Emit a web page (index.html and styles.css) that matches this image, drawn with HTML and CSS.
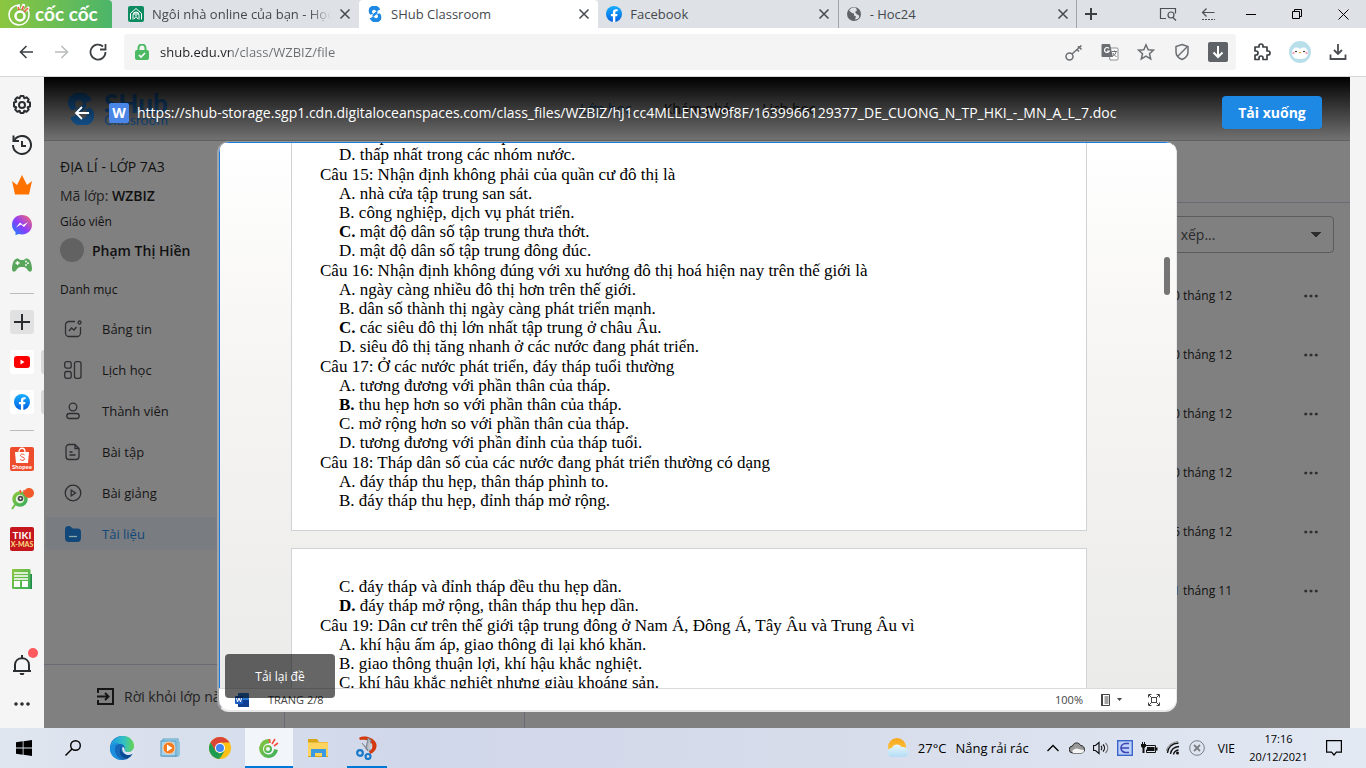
FILE: index.html
```html
<!DOCTYPE html>
<html lang="vi">
<head>
<meta charset="utf-8">
<title>SHub Classroom</title>
<link rel="stylesheet" href="styles.css">
</head>
<body>
<svg class="defs" aria-hidden="true">
  <defs>
    <linearGradient id="gMsg" x1="0" y1="1" x2="1" y2="0"><stop offset="0" stop-color="#0a8cff"/><stop offset=".45" stop-color="#8a3cff"/><stop offset="1" stop-color="#ff6a6a"/></linearGradient>
    <linearGradient id="gGreen" x1="0" y1="0" x2="1" y2="1"><stop offset="0" stop-color="#8cc63f"/><stop offset="1" stop-color="#3aaf5c"/></linearGradient>
    <linearGradient id="gFb" x1="0" y1="0" x2="0" y2="1"><stop offset="0" stop-color="#19afff"/><stop offset="1" stop-color="#0062e0"/></linearGradient>
    <linearGradient id="gEdge" x1="0" y1="0" x2="1" y2="0"><stop offset="0" stop-color="#1b9de2"/><stop offset=".6" stop-color="#35c1c0"/><stop offset="1" stop-color="#66d64b"/></linearGradient>
    <linearGradient id="gSun" x1="0" y1="0" x2="0" y2="1"><stop offset="0" stop-color="#f7a61c"/><stop offset="1" stop-color="#fdd04b"/></linearGradient>
    <linearGradient id="gCloud" x1="0" y1="0" x2="0" y2="1"><stop offset="0" stop-color="#e9f6fd"/><stop offset="1" stop-color="#b4dcf5"/></linearGradient>
  </defs>
  <symbol id="x" viewBox="0 0 12 12"><path d="M1.5 1.5l9 9m0-9l-9 9" stroke="currentColor" stroke-width="1.5" fill="none"/></symbol>
  <symbol id="dots" viewBox="0 0 16 4"><circle cx="2" cy="2" r="1.8"/><circle cx="8" cy="2" r="1.8"/><circle cx="14" cy="2" r="1.8"/></symbol>
  <symbol id="fb" viewBox="0 0 16 16"><circle cx="8" cy="8" r="8" fill="url(#gFb)"/><path d="M6.9 16v-5.700H4.900V8h2V6.300c0-2 1.200-3.100 3-3.100.9 0 1.700.1 1.700.1v2h-1c-1 0-1.300.6-1.300 1.200V8h2.200l-.4 2.300H9.300V16z" fill="#fff"/></symbol>
  <symbol id="shub" viewBox="0 0 26 32"><path d="M23.500 7A12 10.500 0 1 0 4 17.500L9.500 15a4 4 0 1 1 5.500-4z"/><path d="M2.500 24.500A12 10.500 0 1 0 22 14.500L16.500 17a4 4 0 1 1-5.500 4z"/><path d="M8 17L18 9v6L8 23z"/></symbol>
</svg>

<header class="tabs">
  <a class="brand" href="#" aria-label="Cốc Cốc">
    <svg width="22" height="24" viewBox="0 0 22 24" fill="none"><path d="M12 3A10 10 0 1 0 21 13" stroke="#fff" stroke-width="1.500"/><path d="M21 13c0-3 0-5-2-6" stroke="#fff" stroke-width="1.500"/><circle cx="12" cy="14" r="4.500" stroke="#fff" stroke-width="2.500"/><path d="M11 7L10 3m4 4l2-5m1 7l4-4" stroke="#fff" stroke-width="3"/><path d="M11 8l-.8-3m3.800 3l1.500-4m.5 6l4-4" stroke="#f0543c" stroke-width="1.600"/></svg>
    <span class="brand-name">cốc cốc</span>
  </a>
  <nav class="tab-list">
    <div class="tab">
      <svg width="16" height="16" viewBox="0 0 16 16"><rect width="16" height="16" rx="2" fill="#0d8a5f"/><path d="M2.500 13.500V7.500L8 2.500l5.500 5v6M5 13.500V9a3 3 0 0 1 6 0v4.500M6 13l2-2.500 2 2.500" stroke="#fff" fill="none"/><circle cx="8" cy="8" r="1.300" stroke="#fff" fill="none"/></svg>
      <span class="tab-title fade">Ngôi nhà online của bạn - Học</span>
      <button class="icon-btn" aria-label="Đóng"><svg width="12" height="12"><use href="#x"/></svg></button>
    </div>
    <div class="tab active">
      <svg width="16" height="16" viewBox="0 0 26 32" fill="#1e88e5"><use href="#shub"/></svg>
      <span class="tab-title">SHub Classroom</span>
      <button class="icon-btn" aria-label="Đóng"><svg width="12" height="12"><use href="#x"/></svg></button>
    </div>
    <div class="tab">
      <svg width="16" height="16"><use href="#fb"/></svg>
      <span class="tab-title">Facebook</span>
      <button class="icon-btn" aria-label="Đóng"><svg width="12" height="12"><use href="#x"/></svg></button>
    </div>
    <div class="tab lined">
      <svg width="16" height="16" viewBox="0 0 16 16"><circle cx="8" cy="8" r="7" fill="#5f6368"/><path d="M3 4.500l3 2.500 2 .5v2l2 1-1 3c4 0 4.500-3 4-4L10.500 8 9 6l2-1.500-1-2.500C7 1 5 2 3 4.500z" fill="#dee1e6"/></svg>
      <span class="tab-title">- Hoc24</span>
      <button class="icon-btn" aria-label="Đóng"><svg width="12" height="12"><use href="#x"/></svg></button>
    </div>
  </nav>
  <button class="icon-btn new-tab" aria-label="Thẻ mới"><svg width="12" height="12" viewBox="0 0 12 12"><path d="M6 0v12M0 6h12" stroke="#3c4043" stroke-width="2"/></svg></button>
  <div class="win">
    <button class="icon-btn" aria-label="Tìm thẻ"><svg width="18" height="14" viewBox="0 0 18 14" fill="none" stroke="#4c5054" stroke-width="1.200"><path d="M7 11.500H1.500V1.500h15v5"/><circle cx="12" cy="8" r="3"/><path d="M14 10.500l3 3"/></svg></button>
    <button class="icon-btn" aria-label="Thanh bên"><svg width="14" height="14" viewBox="0 0 14 14" fill="none" stroke="#4c5054" stroke-width="1.200"><path d="M13.500 5.500H1.500M5.500 1.500l-4 4 4 4"/><path d="M1 12.500h13" stroke-dasharray="2 1"/></svg></button>
    <button class="icon-btn wide" aria-label="Thu nhỏ"><svg width="10" height="10" viewBox="0 0 10 10"><path d="M0 5.500h10" stroke="#000"/></svg></button>
    <button class="icon-btn wide" aria-label="Khôi phục"><svg width="10" height="10" viewBox="0 0 10 10" fill="none" stroke="#000"><path d="M.5 2.500h7v7h-7zM2.500 2.500v-2h7v7h-2"/></svg></button>
    <button class="icon-btn wide" aria-label="Đóng cửa sổ"><svg width="11" height="11" viewBox="0 0 11 11"><path d="M.5.5l10 10m0-10l-10 10" stroke="#000"/></svg></button>
  </div>
</header>

<div class="toolbar">
  <div class="nav-btns">
    <button class="icon-btn" aria-label="Quay lại"><svg width="14" height="14" viewBox="0 0 14 14" fill="none" stroke="#3c4043" stroke-width="1.600"><path d="M14 7H1.500M7.500 1l-6 6 6 6"/></svg></button>
    <button class="icon-btn" aria-label="Tiến"><svg width="14" height="14" viewBox="0 0 14 14" fill="none" stroke="#babcbe" stroke-width="1.600"><path d="M0 7h12.500M6.500 1l6 6-6 6"/></svg></button>
    <button class="icon-btn" aria-label="Tải lại"><svg width="18" height="18" viewBox="0 0 18 18" fill="none" stroke="#3c4043" stroke-width="1.800"><path d="M16.500 9A7.500 7.500 0 1 1 14 3.500"/><path d="M16.500 1v5.500H11"/></svg></button>
  </div>
  <div class="address">
    <svg width="14" height="16" viewBox="0 0 14 16"><path d="M3.500 7V4a3.500 3.500 0 0 1 7 0v3" stroke="#4cb963" stroke-width="2" fill="none"/><rect y="6" width="14" height="10" rx="2" fill="#4cb963"/><path d="M4 11l2 2 4-4" stroke="#fff" stroke-width="1.600" fill="none"/></svg>
    <input class="url" type="text" aria-label="Địa chỉ" value="shub.edu.vn/class/WZBIZ/file">
    <div class="addr-tools">
      <button class="icon-btn" aria-label="Mật khẩu"><svg width="18" height="18" viewBox="0 0 18 18" fill="none" stroke="#6b6e72" stroke-width="1.500"><circle cx="4.500" cy="13.500" r="3.500"/><path d="M7 11l9.500-8.500M12 6.500l2 2M14.500 4.500l2 2M13.500 5.500V3"/></svg></button>
      <button class="icon-btn" aria-label="Dịch"><svg width="18" height="18" viewBox="0 0 18 18"><path d="M7 5h9a1 1 0 0 1 1 1v10a1 1 0 0 1-1 1H9z" fill="#fff" stroke="#8b8e91"/><path d="M1.500 1H9l3 13H1.500a1 1 0 0 1-1-1V2a1 1 0 0 1 1-1z" fill="#6b6e72"/><path d="M8 5.500A2.500 2.500 0 1 0 8.300 8H6" stroke="#fff" stroke-width="1.200" fill="none"/><path d="M11 8.500h5M13.500 7.500v1m1.500 0c0 2-2 4-3 4.500m0-3c1 2 2 3 3.500 3.500" stroke="#6b6e72" fill="none"/></svg></button>
      <button class="icon-btn" aria-label="Dấu trang"><svg width="18" height="18" viewBox="0 0 18 18"><path d="M9 1.800l2.200 4.900 5.200.5-3.900 3.500 1.200 5.200L9 13.200l-4.700 2.700 1.200-5.200-3.900-3.500 5.200-.5z" stroke="#6b6e72" stroke-width="1.500" fill="none"/></svg></button>
      <button class="icon-btn" aria-label="Chặn quảng cáo"><svg width="18" height="18" viewBox="0 0 18 18" fill="none" stroke="#6b6e72" stroke-width="1.500"><path d="M9 1.500l6 2V9c0 3.500-2.500 6-6 7.500C5.500 15 3 12.500 3 9V3.500z"/><path d="M4.500 13.500L14 4"/></svg></button>
      <button class="icon-btn" aria-label="Tải video"><svg width="20" height="20" viewBox="0 0 20 20"><rect width="20" height="20" rx="2" fill="#5f6368"/><path d="M10 4v11M5.500 10.500L10 15l4.500-4.500" stroke="#fff" stroke-width="2" fill="none"/></svg></button>
    </div>
  </div>
  <div class="ext">
    <button class="icon-btn" aria-label="Tiện ích"><svg width="18" height="18" viewBox="0 0 18 18"><path d="M2 4h4V3a2 2 0 0 1 4 0v1h4v4h1a2 2 0 0 1 0 4h-1v4.500h-4V15a2 2 0 0 0-4 0v1.500H2V12h1a2 2 0 0 0 0-4H2z" stroke="#3c4043" stroke-width="1.700" fill="none" stroke-linejoin="round"/></svg></button>
    <button class="icon-btn" aria-label="Hồ sơ"><svg width="22" height="22" viewBox="0 0 22 22"><circle cx="11" cy="11" r="11" fill="#b9e0ea"/><path d="M3 12c0-5 4-7 8-4 4-3 8-1 8 4s-4 6-8 6-8-1-8-6z" fill="#fff"/><path d="M9.500 11h3l-1.500 1.500z" fill="#f09a2e"/><circle cx="7" cy="10.500" r=".8"/><circle cx="15" cy="10.500" r=".8"/><circle cx="4.500" cy="12" r="1.200" fill="#f8a3b2"/><circle cx="17.500" cy="12" r="1.200" fill="#f8a3b2"/></svg></button>
    <button class="icon-btn" aria-label="Tải xuống"><svg width="18" height="18" viewBox="0 0 18 18" fill="none" stroke="#4a4d51" stroke-width="1.800"><path d="M9 1v10M5 7l4 4 4-4M1.500 11.500V16h15v-4.500"/></svg></button>
  </div>
</div>

<main class="work">
  <aside class="rail">
    <button class="rail-item" aria-label="Cài đặt"><svg width="22" height="22" viewBox="0 0 22 22" fill="none" stroke="#2b2e31" stroke-width="2"><circle cx="11" cy="11" r="3"/><path d="M9.500 2h3l.7 2.300 2.300-1 2.200 2.200-1.100 2.200L19 8.500v4l-2.400.8 1.100 2.300-2.200 2.200-2.300-1.100-.7 2.300h-3l-.9-2.300-2.200 1.100-2.200-2.200 1.100-2.300L3 12.500v-4l2.300-.8-1.100-2.200 2.200-2.200 2.200 1z" stroke-linejoin="round"/></svg></button>
    <button class="rail-item" aria-label="Lịch sử"><svg width="20" height="20" viewBox="0 0 20 20" fill="none" stroke="#2b2e31" stroke-width="2"><path d="M2.500 5A9 9 0 1 1 1 10"/><path d="M1.500.5V6H7M10 6v5h4"/></svg></button>
    <button class="rail-item" aria-label="Điểm thưởng"><svg width="20" height="20" viewBox="0 0 20 20"><path d="M0 6l5 4 5-10 5 10 5-4-3 13.500H3z" fill="#ff7200"/></svg></button>
    <button class="rail-item" aria-label="Messenger"><svg width="20" height="20" viewBox="0 0 20 20"><path d="M10 0c5.600 0 10 4.100 10 9.700s-4.400 9.700-10 9.700c-1 0-2-.1-2.900-.4L3.500 20v-3C1.300 15.200 0 12.700 0 9.700 0 4.100 4.400 0 10 0z" fill="url(#gMsg)"/><path d="M4 12.500l4-5 3 2.500 5-3-4 5-3-2.500z" fill="#fff"/></svg></button>
    <button class="rail-item" aria-label="Trò chơi"><svg width="20" height="14" viewBox="0 0 20 14"><path d="M4 1c2-1 3 0 4 1h4c1-1 2-2 4-1 3 1 4 7 4 10s-3 4-5 0c-1-1-2-2-3-2H8c-1 0-2 1-3 2-2 4-5 3-5 0S1 2 4 1z" fill="#58a65c"/><path d="M5.500 3v4m-2-2h4" stroke="#fff" stroke-width="1.400"/><circle cx="14" cy="3.500" r=".9" fill="#fff"/><circle cx="14" cy="7" r=".9" fill="#fff"/><circle cx="16" cy="5.200" r=".9" fill="#fff"/></svg></button>
    <hr class="rail-line">
    <button class="rail-item" aria-label="Thêm"><span class="chip grey"><svg width="16" height="16" viewBox="0 0 16 16"><path d="M8 0v16M0 8h16" stroke="#2b2e31" stroke-width="2"/></svg></span></button>
    <button class="rail-item docked" aria-label="YouTube"><span class="chip"><svg width="16" height="12" viewBox="0 0 16 12"><rect width="16" height="12" rx="3" fill="#f00"/><path d="M6.500 3.500v5l4-2.500z" fill="#fff"/></svg></span></button>
    <button class="rail-item docked" aria-label="Facebook"><span class="chip"><svg width="16" height="16"><use href="#fb"/></svg></span></button>
    <hr class="rail-line">
    <button class="rail-item" aria-label="Shopee"><span class="tile shopee"><svg width="24" height="16" viewBox="0 0 24 16"><path d="M5 5h14l-1 11H6z" fill="#fff"/><path d="M9 5c0-5 6-5 6 0" stroke="#fff" fill="none" stroke-width="1.300"/><path d="M14.500 8c-1.500-1.500-4.500-1-4 .8.500 1.500 4 1.200 4 3 0 2-3 2-4.500.7" stroke="#ee4d2d" fill="none"/></svg><small class="tile-text">Shopee</small></span></button>
    <button class="rail-item" aria-label="Tìm kiếm Cốc Cốc"><svg width="24" height="24" viewBox="0 0 24 24"><path d="M2 22l5-7" stroke="#6cbd45" stroke-width="2"/><circle cx="10" cy="12" r="6" fill="#e6f5e2" stroke="url(#gGreen)" stroke-width="3.500"/><circle cx="10.500" cy="11.500" r="2.800" fill="#4a4a4a"/><circle cx="10.500" cy="11.500" r="1" fill="#fff"/><path d="M11 6l-1-3m4 4l0-4" stroke="#f0543c" stroke-width="1.500"/><circle cx="19" cy="6" r="5" fill="#f15a29"/></svg></button>
    <button class="rail-item" aria-label="Tiki"><span class="tile tiki"><small class="tile-text big">TIKI</small><small class="tile-text gold">X-MAS</small></span></button>
    <button class="rail-item" aria-label="Tin tức"><svg width="20" height="20" viewBox="0 0 20 20"><path d="M17 5h3v15H2z" fill="#1f8a4c"/><rect width="18.500" height="20" rx="1" fill="url(#gGreen)"/><path d="M2 4h14M2 7h14M2 10h14" stroke="#fff" stroke-width="1.500"/><rect x="2" y="12" width="6" height="6" fill="#fff"/><rect x="10" y="12" width="6" height="6" fill="#fff"/></svg></button>
    <div class="rail-end">
      <button class="rail-item" aria-label="Thông báo"><svg width="24" height="30" viewBox="0 0 24 30"><path d="M3 22h18M5 22v-6c0-9 14-9 14 0v6" stroke="#2b2e31" stroke-width="2" fill="none"/><path d="M9.500 24h5l-1 2h-3zM11 6h2v3h-2z" fill="#2b2e31"/></svg><span class="dot-badge"></span></button>
      <button class="rail-item" aria-label="Thêm nữa"><svg width="16" height="4" fill="#2b2e31"><use href="#dots"/></svg></button>
    </div>
  </aside>

  <section class="page">
    <div class="app">
      <header class="app-head">
        <a class="shub" href="#"><svg width="26" height="32" fill="#1a72c4"><use href="#shub"/></svg><span><b class="shub-name">SHub</b><span class="shub-sub">Classroom</span></span></a>
        <nav class="app-nav"><a class="on" href="#">Lớp học</a><a href="#">Khám phá</a><a href="#">Lịch học</a></nav>
      </header>
      <div class="app-body">
        <aside class="class-nav">
          <div class="class-info">
            <h1 class="class-name">ĐỊA LÍ - LỚP 7A3</h1>
            <p class="code">Mã lớp: <b>WZBIZ</b></p>
            <p class="label">Giáo viên</p>
            <p class="teacher"><span class="avatar"></span>Phạm Thị Hiền</p>
            <p class="label">Danh mục</p>
          </div>
          <nav class="menu">
            <a href="#"><svg viewBox="0 0 18 18"><path d="M11 1.500H5A3.500 3.500 0 0 0 1.500 5v8A3.500 3.500 0 0 0 5 16.500h8a3.500 3.500 0 0 0 3.500-3.500V7M5 11l2.500-3 2.500 2 2.500-3"/><circle cx="15.500" cy="2.500" r="1.500"/></svg>Bảng tin</a>
            <a href="#"><svg viewBox="0 0 18 18"><rect x=".7" y=".7" width="6.500" height="6.500" rx="2"/><rect x=".7" y="10.500" width="6.500" height="6.800" rx="2"/><rect x="10.500" y=".7" width="6.500" height="16.600" rx="2"/></svg>Lịch học</a>
            <a href="#"><svg viewBox="0 0 18 18"><circle cx="9" cy="5" r="3.800"/><rect x="2.800" y="11.500" width="12.400" height="5" rx="2.500"/></svg>Thành viên</a>
            <a href="#"><svg viewBox="0 0 18 18"><path d="M11 1.500H5A3 3 0 0 0 2 4.500v9a3 3 0 0 0 3 3h7a3 3 0 0 0 3-3v-8zV5.500h4M5.500 9h3M5.500 12h6"/></svg>Bài tập</a>
            <a href="#"><svg viewBox="0 0 18 18"><circle cx="9" cy="9" r="7.800"/><path d="M7.200 6.200v5.600L11.500 9z"/></svg>Bài giảng</a>
            <a class="current" href="#"><svg viewBox="0 0 18 18"><path d="M1 5c0-3 1-4 3.500-4 3 0 3 2.500 5 2.500H13c3 0 4 1 4 4v5c0 3-1 4.500-4 4.500H5c-3 0-4-1.500-4-4.500z" fill="#12477a" stroke="none"/><path d="M5 11.500h8" stroke="#8aa"/></svg>Tài liệu</a>
          </nav>
          <a class="leave" href="#"><svg width="17" height="17" viewBox="0 0 17 17" fill="none" stroke="#161616" stroke-width="2"><path d="M1 5V1h15v15H1v-4M0 8.500h11M8 5l3.500 3.500L8 12"/></svg>Rời khỏi lớp này</a>
        </aside>
        <div class="folders"></div>
        <div class="files">
          <div class="files-head"></div>
          <div class="sort"><select aria-label="Sắp xếp"><option>Sắp xếp...</option></select></div>
          <ul class="file-list">
            <li><span>20 tháng 12</span><button class="icon-btn" aria-label="Tuỳ chọn"><svg width="14" height="4" viewBox="0 0 16 4"><use href="#dots"/></svg></button></li>
            <li><span>20 tháng 12</span><button class="icon-btn" aria-label="Tuỳ chọn"><svg width="14" height="4" viewBox="0 0 16 4"><use href="#dots"/></svg></button></li>
            <li><span>20 tháng 12</span><button class="icon-btn" aria-label="Tuỳ chọn"><svg width="14" height="4" viewBox="0 0 16 4"><use href="#dots"/></svg></button></li>
            <li><span>20 tháng 12</span><button class="icon-btn" aria-label="Tuỳ chọn"><svg width="14" height="4" viewBox="0 0 16 4"><use href="#dots"/></svg></button></li>
            <li><span>16 tháng 12</span><button class="icon-btn" aria-label="Tuỳ chọn"><svg width="14" height="4" viewBox="0 0 16 4"><use href="#dots"/></svg></button></li>
            <li><span>1 tháng 11</span><button class="icon-btn" aria-label="Tuỳ chọn"><svg width="14" height="4" viewBox="0 0 16 4"><use href="#dots"/></svg></button></li>
          </ul>
        </div>
      </div>
    </div>

    <div class="viewer">
      <header class="viewer-head">
        <button class="icon-btn" aria-label="Quay lại"><svg width="16" height="14" viewBox="0 0 16 14" fill="none" stroke="#fff" stroke-width="1.800"><path d="M15 7H2M8 1L2 7l6 6"/></svg></button>
        <span class="w-icon">W</span>
        <span class="file-url">https://shub-storage.sgp1.cdn.digitaloceanspaces.com/class_files/WZBIZ/hJ1cc4MLLEN3W9f8F/1639966129377_DE_CUONG_N_TP_HKI_-_MN_A_L_7.doc</span>
        <button class="download">Tải xuống</button>
      </header>
      <div class="frame">
        <div class="doc">
          <article class="paper first">
            <section class="q">
              <p class="opt">C. thấp hơn ở các nước phát triển.</p>
              <p class="opt">D. thấp nhất trong các nhóm nước.</p>
            </section>
            <section class="q">
              <p>Câu 15: Nhận định không phải của quần cư đô thị là</p>
              <p class="opt">A. nhà cửa tập trung san sát.</p>
              <p class="opt">B. công nghiệp, dịch vụ phát triển.</p>
              <p class="opt"><b>C.</b> mật độ dân số tập trung thưa thớt.</p>
              <p class="opt">D. mật độ dân số tập trung đông đúc.</p>
            </section>
            <section class="q">
              <p>Câu 16: Nhận định không đúng với xu hướng đô thị hoá hiện nay trên thế giới là</p>
              <p class="opt">A. ngày càng nhiều đô thị hơn trên thế giới.</p>
              <p class="opt">B. dân số thành thị ngày càng phát triển mạnh.</p>
              <p class="opt"><b>C.</b> các siêu đô thị lớn nhất tập trung ở châu Âu.</p>
              <p class="opt">D. siêu đô thị tăng nhanh ở các nước đang phát triển.</p>
            </section>
            <section class="q">
              <p>Câu 17: Ở các nước phát triển, đáy tháp tuổi thường</p>
              <p class="opt">A. tương đương với phần thân của tháp.</p>
              <p class="opt"><b>B.</b> thu hẹp hơn so với phần thân của tháp.</p>
              <p class="opt">C. mở rộng hơn so với phần thân của tháp.</p>
              <p class="opt">D. tương đương với phần đỉnh của tháp tuổi.</p>
            </section>
            <section class="q">
              <p>Câu 18: Tháp dân số của các nước đang phát triển thường có dạng</p>
              <p class="opt">A. đáy tháp thu hẹp, thân tháp phình to.</p>
              <p class="opt">B. đáy tháp thu hẹp, đỉnh tháp mở rộng.</p>
            </section>
          </article>
          <article class="paper second">
            <section class="q">
              <p class="opt">C. đáy tháp và đỉnh tháp đều thu hẹp dần.</p>
              <p class="opt"><b>D.</b> đáy tháp mở rộng, thân tháp thu hẹp dần.</p>
            </section>
            <section class="q">
              <p>Câu 19: Dân cư trên thế giới tập trung đông ở Nam Á, Đông Á, Tây Âu và Trung Âu vì</p>
              <p class="opt">A. khí hậu ấm áp, giao thông đi lại khó khăn.</p>
              <p class="opt">B. giao thông thuận lợi, khí hậu khắc nghiệt.</p>
              <p class="opt">C. khí hậu khắc nghiệt nhưng giàu khoáng sản.</p>
            </section>
          </article>
          <span class="thumb"></span>
        </div>
        <footer class="status">
          <svg width="14" height="14" viewBox="0 0 14 14"><rect x="3" width="11" height="14" rx="1" fill="#2b7cd3"/><rect x="3" y="7" width="11" height="7" fill="#103f91"/><rect y="3" width="8" height="8" rx="1" fill="#185abd"/><path d="M1.500 5l1 4 1.500-4 1.500 4 1-4" stroke="#fff" fill="none"/></svg>
          <span class="page-no">TRANG 2/8</span>
          <span class="zoom">100%</span>
          <button class="icon-btn view-mode" aria-label="Chế độ xem"><svg width="22" height="12" viewBox="0 0 22 12"><path d="M.500.500h8v11h-8zM3.500 3h4M3.500 5h4M3.500 7h4M3.500 9h4" stroke="#444" fill="none"/><path d="M0 0h2v12H0zM16 4h5l-2.500 3z" fill="#444"/></svg></button>
          <button class="icon-btn full" aria-label="Toàn màn hình"><svg width="12" height="12" viewBox="0 0 12 12" fill="none" stroke="#444"><path d="M.5 3.500v-3h3M8.500.5h3v3M11.500 8.500v3h-3M3.500 11.500h-3v-3M1 1l3 3M11 1L8 4M11 11L8 8M1 11l3-3"/><rect x="3.500" y="3.500" width="5" height="5"/></svg></button>
        </footer>
      </div>
      <button class="reload">Tải lại đề</button>
    </div>
  </section>
</main>

<footer class="taskbar">
  <nav class="apps">
    <button class="app-btn" aria-label="Bắt đầu"><svg width="16" height="16" viewBox="0 0 16 16"><path d="M0 2.300l6.700-1v6.200H0zM7.500 1.200L16 0v7.500H7.500zM0 8.400h6.700v6.300L0 13.700zM7.500 8.400H16V16l-8.500-1.200z"/></svg></button>
    <button class="app-btn" aria-label="Tìm kiếm"><svg width="16" height="16" viewBox="0 0 16 16" fill="none" stroke="#000" stroke-width="1.400"><circle cx="10.500" cy="5.500" r="4.800"/><path d="M7 9L.5 15.500"/></svg></button>
    <button class="app-btn" aria-label="Microsoft Edge"><svg width="24" height="24" viewBox="0 0 24 24"><circle cx="12" cy="12" r="12" fill="#1668b8"/><path d="M1 9C3 2 9 0 13 0c7 0 11 5 11 10 0 4-3 6-6 6-3 0-4-1-3.500-2.500C15.500 10 13 8 10 8c-4 0-8 2-9.800 6C0 12 .3 10.500 1 9z" fill="url(#gEdge)"/><path d="M0 12c1-3.500 5-6 9-5-3 1-4.500 4-4 8 .5 5 5 8 8 8.800C5 24.500 0 19 0 12z" fill="#1b8fdd"/><path d="M11.500 10.500c-2 4 1 8.500 6 8.500 2 0 4-.8 5-1.500-1 2-3 4-5 5-6 0-10-6-6-12z" fill="#0b4a91"/><path d="M12.500 11c-.8 2.500 0 5.500 3.500 7.500 3 1.200 6 0 6.500-1l1.500 1.500V11c-1 4-3.500 5-6 5s-4-1-3.500-2.500c.3-1-.5-2.500-2-2.500z" fill="#dfe6f1"/></svg></button>
    <button class="app-btn" aria-label="Media Player"><svg width="22" height="20" viewBox="0 0 22 20"><rect x="3" y="1" width="15" height="17" fill="#b4dcef" stroke="#5ba3c7"/><path d="M18 3l2 1v13l-2 2" fill="#8fc4de"/><rect x="1" y="3" width="15" height="15" fill="#a5d3ec" stroke="#4b93bd"/><circle cx="9" cy="10" r="6" fill="#f47b20" stroke="#fbd3b0"/><path d="M7 6.500v7l5.500-3.500z" fill="#fff"/></svg></button>
    <button class="app-btn" aria-label="Chrome"><svg width="22" height="22" viewBox="0 0 22 22"><circle cx="11" cy="11" r="11" fill="#fbc116"/><path d="M1.500 5.500A11 11 0 0 1 20.500 5.500H11L6.200 13.700z" fill="#db4437"/><path d="M1.500 5.500L6.500 14 11 16.500l-.5 5.500A11 11 0 0 1 1.500 5.500z" fill="#1b9c52"/><path d="M10.500 22l5.300-8.500-4.800 3z" fill="#1b9c52"/><circle cx="11" cy="11" r="5" fill="#fff"/><circle cx="11" cy="11" r="4" fill="#4285f4"/></svg></button>
    <button class="app-btn focused" aria-label="Cốc Cốc"><svg width="20" height="20" viewBox="0 0 20 20"><path d="M11 1A9.500 9.500 0 1 0 19 12l-4-1A5.500 5.500 0 1 1 10 5.500z" fill="url(#gGreen)"/><circle cx="9" cy="11" r="3" fill="none" stroke="url(#gGreen)" stroke-width="2"/><path d="M11 5l-.5-4M13 6l3-5M15 8l4-3" stroke="#f0543c" stroke-width="1.600"/></svg></button>
    <button class="app-btn" aria-label="Thư mục"><svg width="22" height="20" viewBox="0 0 22 20"><path d="M1 1h9l2 3h9v15H1z" fill="#d9a518"/><path d="M1 4.500h20V18H1z" fill="#ffd45e"/><path d="M4 19v-8h15v8h-4v-4H8v4z" fill="#3b9ae0"/></svg></button>
    <button class="app-btn running" aria-label="Snipping Tool"><svg width="22" height="24" viewBox="0 0 22 24"><path d="M3 2c5-3 14-1 17 5 2 5-2 10-6 11l-1-3c3-1 4-4 3-7-2-4-8-5-12-4z" fill="#d4380d"/><path d="M12 2l-2 11 3 1 2-10zM6 7l6 8 3-1" fill="#a9b2ba" stroke="#7d868e"/><path d="M13 5l3 5-4 6z" fill="#c4cbd1"/><circle cx="4" cy="17" r="2.800" fill="none" stroke="#1979c9" stroke-width="2.200"/><circle cx="12" cy="20.500" r="2.500" fill="none" stroke="#1979c9" stroke-width="2.200"/></svg></button>
  </nav>
  <div class="tray">
    <a class="weather" href="#"><svg width="22" height="20" viewBox="0 0 22 20"><circle cx="10" cy="9" r="9" fill="url(#gSun)"/><path d="M5 19a4.500 4.500 0 0 1 0-9c1-4 7-5 9.500-1 4-.5 7 2 7 5 0 3-2 5-5 5z" fill="url(#gCloud)"/></svg><span>27°C</span><span>Nắng rải rác</span></a>
    <div class="tray-icons">
      <button class="icon-btn" aria-label="Hiện biểu tượng ẩn"><svg width="12" height="8" viewBox="0 0 12 8"><path d="M.5 7L6 1.500 11.500 7" stroke="#000" stroke-width="1.300" fill="none"/></svg></button>
      <button class="icon-btn" aria-label="OneDrive"><svg width="16" height="12" viewBox="0 0 16 12"><path d="M4 11a3.500 3.500 0 0 1-.5-7C5 0 10 0 11.500 3.500 14 3.500 15.500 5.500 15.500 7.500S14 11 12 11z" fill="#999" stroke="#222"/><path d="M4 11c-1-1-1-3 1-3.500C8 5 10 8 15 8c0 2-1 3-3 3z" fill="#f4f4f4"/></svg></button>
      <button class="icon-btn" aria-label="Âm lượng"><svg width="16" height="14" viewBox="0 0 16 14" fill="none" stroke="#111" stroke-width="1.200"><path d="M.5 4.500h2L6 1.500v11L2.500 9.500h-2zM8 5c1 1 1 3 0 4M10 3.500c2 2 2 5 0 7"/><path d="M12.500 2c3 3 3 7 0 10" stroke="#777"/></svg></button>
      <button class="icon-btn" aria-label="Unikey"><svg width="16" height="16" viewBox="0 0 16 16"><rect x=".7" y=".7" width="14.600" height="14.600" fill="#bcd0fb" stroke="#3b64c8" stroke-width="1.400"/><path d="M12 3.500H8.500a4.500 4.500 0 0 0 0 9H12M4.500 8H12" stroke="#3a46b0" stroke-width="1.600" fill="none"/></svg></button>
      <button class="icon-btn" aria-label="Pin"><svg width="18" height="12" viewBox="0 0 18 12"><path d="M4.500 3.500h11v7h-9v-3" stroke="#111" fill="none"/><path d="M7 5h7.500v4H7zM16 5.500h1.500v3H16zM1 2h5v2.500L4.500 6v5h-2V6L1 4.500zM2 0h1v2H2zM4 0h1v2H4z" fill="#111"/></svg></button>
      <button class="icon-btn" aria-label="Mạng"><svg width="14" height="14" viewBox="0 0 14 14" fill="none" stroke="#111"><path d="M1.500 12C2 6 6 2.500 12.500 2M4.500 13c.5-4 3-7 8.500-7.500M7.500 13.500c.5-2.500 2-4 5-4.500" stroke-width="1.300"/><path d="M.5 10C1 5 5 1.500 12 .5" stroke="#888"/><circle cx="11.500" cy="12" r="1.500" fill="#111" stroke="none"/></svg></button>
      <button class="icon-btn" aria-label="Ngắt kết nối"><svg width="16" height="16" viewBox="0 0 16 16" fill="none" stroke="#7a7d82"><circle cx="8" cy="8" r="7.300"/><path d="M5 5l6 6M11 5l-6 6" stroke-width="1.800"/></svg></button>
    </div>
    <span class="lang">VIE</span>
    <time class="clock"><span>17:16</span><span>20/12/2021</span></time>
    <button class="icon-btn notes" aria-label="Trung tâm thông báo"><svg width="16" height="16" viewBox="0 0 16 16"><path d="M.6.600h14.800v11.500h-5L8 15l-2.500-2.900H.6z" stroke="#000" stroke-width="1.200" fill="none"/></svg></button>
  </div>
</footer>
</body>
</html>
```
FILE: styles.css
```css
* { box-sizing: border-box; }
body {
  margin: 0;
  height: 100vh;
  display: flex;
  flex-direction: column;
  overflow: hidden;
  font-family: "Open Sans", "Noto Sans", sans-serif;
  font-size: 13px;
  color: #000;
}
p, h1, ul { margin: 0; padding: 0; }
a { color: inherit; text-decoration: none; }
button, input, select { font: inherit; color: inherit; }
svg { flex: none; display: block; }
.defs { position: absolute; width: 0; height: 0; }
.icon-btn {
  display: flex;
  align-items: center;
  justify-content: center;
  padding: 0;
  border: 0;
  background: none;
}

/* tab strip */
.tabs { display: flex; flex: none; height: 28px; background: #dee1e6; }
.brand {
  display: flex;
  align-items: center;
  gap: 5px;
  width: 112px;
  padding-left: 8px;
  background: linear-gradient(90deg, #8cc63f, #4bb56a);
  border-top-right-radius: 4px;
  color: #fff;
}
.brand-name { font: bold 19px/28px Lato, sans-serif; white-space: nowrap; }
.tab-list { display: flex; width: 965px; }
.tab {
  display: flex;
  flex: 1;
  align-items: center;
  gap: 8px;
  min-width: 0;
  padding: 0 8px;
  color: #45494d;
}
.tab:first-child { flex: 0 0 247px; padding: 0 8px 0 16px; }
.tab.active { background: #fff; border-radius: 4px 4px 0 0; }
.tab.lined { box-shadow: inset 1px 0 #a0a3a7, inset -1px 0 #a0a3a7; }
.tab-title { flex: 1; overflow: hidden; white-space: nowrap; }
.fade { -webkit-mask-image: linear-gradient(90deg, #000 88%, transparent); mask-image: linear-gradient(90deg, #000 88%, transparent); }
.new-tab { width: 28px; }
.win { display: flex; gap: 18px; margin-left: auto; padding-right: 9px; }
.win .icon-btn { width: 22px; }
.win .icon-btn.wide { width: 28px; }

/* toolbar */
.toolbar {
  display: flex;
  flex: none;
  align-items: center;
  height: 49px;
  border-bottom: 1px solid #d5d9d5;
  background: #fff;
}
.nav-btns { display: flex; width: 124px; padding-left: 8px; }
.nav-btns .icon-btn { width: 36px; height: 36px; }
.address {
  display: flex;
  flex: 1;
  align-items: center;
  gap: 11px;
  height: 36px;
  padding: 0 8px 0 11px;
  border-radius: 3px;
  background: #f4f4f4;
}
.url {
  flex: 1;
  min-width: 0;
  padding: 0;
  border: 0;
  font-size: 13px;
  color: transparent;
  background: linear-gradient(90deg, #202124 70px, #6a6d71 70px);
  -webkit-background-clip: text;
  background-clip: text;
}
.addr-tools { display: flex; gap: 16px; }
.addr-tools .icon-btn { width: 20px; }
.ext { display: flex; gap: 16px; padding: 0 17px 0 15px; }
.ext .icon-btn { width: 22px; }

/* side rail */
.work { display: flex; flex: 1; min-height: 0; padding-right: 16px; background: #f4f4f4; }
.rail { display: flex; flex-direction: column; width: 44px; padding: 8px 0 4px; background: #f5f5f5; }
.rail-item {
  position: relative;
  display: flex;
  flex: none;
  align-items: center;
  justify-content: center;
  width: 44px;
  height: 40px;
  padding: 0;
  border: 0;
  background: none;
}
.rail-item.docked::after {
  content: "";
  position: absolute;
  right: 0;
  top: 8px;
  width: 3px;
  height: 24px;
  border-radius: 3px 0 0 3px;
  background: #d8d8d8;
}
.rail-line { width: 24px; height: 1px; margin: 8px 10px; border: 0; background: #bbb; }
.chip {
  display: flex;
  align-items: center;
  justify-content: center;
  width: 24px;
  height: 24px;
  border-radius: 3px;
  background: #fff;
}
.chip.grey { background: #e1e1e1; }
.tile {
  display: flex;
  flex-direction: column;
  align-items: center;
  width: 24px;
  height: 24px;
  overflow: hidden;
  border-radius: 2px;
  color: #fff;
}
.shopee { background: #ee4d2d; }
.tiki { justify-content: center; background: #c4161c; }
.tile-text { font: bold 6px/8px Lato, sans-serif; }
.tile-text.big { font-size: 10px; line-height: 10px; }
.tile-text.gold { color: #ffe08a; font-size: 7px; }
.rail-end { margin-top: auto; }
.dot-badge {
  position: absolute;
  top: 4px;
  right: 6px;
  width: 10px;
  height: 10px;
  border-radius: 50%;
  background: #ff5a5f;
}

/* dimmed class page */
.page { position: relative; flex: 1; min-width: 0; background: #808080; }
.app { display: flex; flex-direction: column; height: 100%; color: #111; }
.app-head {
  display: flex;
  flex: none;
  height: 64px;
  padding-left: 24px;
  border-bottom: 1px solid #6c6c6c;
}
.shub { display: flex; align-items: center; gap: 10px; width: 512px; color: #1a62a8; }
.shub-name { display: block; font: 900 26px/22px Lato, sans-serif; }
.shub-sub { display: block; font: 14px/12px Lato, sans-serif; }
.app-nav { display: flex; gap: 32px; padding-top: 20px; font-size: 14px; line-height: 24px; }
.app-nav .on { color: #0d3560; }
.app-body { display: flex; flex: 1; min-height: 0; }
.class-nav {
  display: flex;
  flex-direction: column;
  width: 241px;
  border-right: 1px solid #6b6b78;
}
.class-info { padding: 14px 16px 0; }
.class-name { font-size: 14px; font-weight: 500; line-height: 24px; }
.code { padding-top: 5px; font-size: 14px; line-height: 24px; color: #222; }
.code b { font-weight: 600; color: #111; }
.label { font-size: 12px; line-height: 28px; }
.teacher {
  display: flex;
  align-items: center;
  gap: 8px;
  height: 28px;
  margin-bottom: 12px;
  font-size: 14px;
  font-weight: 600;
}
.avatar { width: 24px; height: 24px; border-radius: 50%; background: #626262; }
.menu { padding: 8px 0 0 2px; }
.menu a {
  display: flex;
  align-items: center;
  gap: 20px;
  height: 33px;
  margin-bottom: 8px;
  padding-left: 18px;
  font-weight: 500;
  color: #161616;
}
.menu svg { width: 18px; height: 18px; fill: none; stroke: #2e2e33; stroke-width: 1.3; }
.menu .current { background: #797c80; color: #12477a; }
.leave {
  display: flex;
  align-items: center;
  gap: 10px;
  height: 64px;
  margin-top: auto;
  padding: 0 0 0 53px;
  border-top: 1px solid #6b6b78;
  font-size: 14px;
  white-space: nowrap;
  overflow: hidden;
  color: #222;
}
.folders { width: 240px; border-right: 1px solid #6b6b78; }
.files { flex: 1; }
.files-head { height: 62px; border-bottom: 1px solid #6b6b78; }
.sort { display: flex; justify-content: flex-end; padding: 13px 16px; }
.sort select {
  appearance: none;
  width: 200px;
  height: 37px;
  padding: 0 18px;
  border: 1px solid #5c5c5c;
  border-radius: 4px;
  color: #2a2a2a;
  font-size: 14px;
  background: linear-gradient(to bottom right, #2e2e2e 50%, transparent 50%) right 12px center / 5px 5px no-repeat,
              linear-gradient(to bottom left, #2e2e2e 50%, transparent 50%) right 17px center / 5px 5px no-repeat;
}
.file-list { list-style: none; }
.file-list li {
  display: flex;
  align-items: center;
  justify-content: flex-end;
  gap: 72px;
  height: 59px;
  padding-right: 32px;
  font-size: 12px;
}
.file-list svg { fill: #2e2e2e; }

/* document viewer over the page */
.viewer {
  position: absolute;
  inset: 0;
  display: flex;
  flex-direction: column;
  padding-bottom: 16px;
}
.viewer-head {
  display: flex;
  flex: none;
  align-items: center;
  height: 64px;
  padding: 7px 28px 0 30px;
  background: linear-gradient(#000, rgba(0, 0, 0, 0.1));
  color: #fff;
  font-size: 14px;
}
.w-icon {
  width: 20px;
  height: 20px;
  margin: 0 8px 0 19px;
  border-radius: 2px;
  background: #4a86e8;
  font-weight: bold;
  line-height: 20px;
  text-align: center;
}
.file-url { white-space: nowrap; }
.download {
  height: 33px;
  width: 100px;
  margin-left: auto;
  padding: 0;
  border: 0;
  border-radius: 4px;
  background: #1e88e5;
  font-weight: bold;
}
.frame {
  display: flex;
  flex: 1;
  flex-direction: column;
  min-height: 0;
  margin: 0 173px;
  overflow: hidden;
  border: 2px solid #e8e8e8;
  border-width: 1px 1px 2px 2px;
  border-left-color: #a2a6ab;
  border-top-color: #989898;
  border-radius: 12px;
  background: #fff;
}
.doc {
  position: relative;
  flex: 1;
  min-height: 0;
  padding-right: 18px;
  overflow: hidden;
  border-top: 1px solid #1a7be0;
  border-left: 1px solid #1a7be0;
  background: linear-gradient(#fff, #f5f4f2 45%, #ebebea);
  font: 17px/19px "Liberation Serif", serif;
}
.paper {
  width: 796px;
  margin: 0 auto 17px;
  padding: 28px 28px 19px;
  border: 1px solid #d0d3d6;
  background: #fff;
  white-space: nowrap;
}
.paper.first { margin-top: -46px; }
.q { margin-bottom: 1px; }
.opt { padding-left: 19px; }
.thumb {
  position: absolute;
  right: 6px;
  top: 114px;
  width: 6px;
  height: 38px;
  border-radius: 3px;
  background: #757575;
}
.status {
  display: flex;
  flex: none;
  align-items: center;
  height: 22px;
  padding: 0 16px;
  border-top: 1px solid #dadada;
  font-size: 11px;
  color: #444;
}
.page-no { margin: 0 auto 0 19px; }
.view-mode { margin: 0 25px 0 18px; }
.reload {
  position: absolute;
  left: 181px;
  bottom: 30px;
  width: 110px;
  height: 44px;
  border: 0;
  border-radius: 4px;
  background: rgba(0, 0, 0, 0.6);
  color: #fff;
  font-size: 12px;
  font-weight: 500;
}

/* taskbar */
.taskbar {
  display: flex;
  flex: none;
  height: 40px;
  background: linear-gradient(90deg, #dfe6ef, #d0d7ea 30%, #d6dcea 60%, #e3e9f3);
}
.apps { display: flex; gap: 1px; }
.app-btn {
  display: flex;
  align-items: center;
  justify-content: center;
  width: 48px;
  height: 40px;
  padding: 0;
  border: 0;
  background: none;
}
.focused { background: #f2f6fb; box-shadow: inset 0 -2px #0078d7; }
.running {
  background: linear-gradient(#0078d7, #0078d7) center bottom / 40px 2px no-repeat;
}
.tray { display: flex; align-items: center; margin-left: auto; }
.weather { display: flex; align-items: center; gap: 9px; font-size: 13px; }
.tray-icons { display: flex; gap: 8px; padding-left: 16px; }
.tray-icons .icon-btn { width: 16px; height: 24px; }
.lang { padding-left: 13px; font-size: 12px; }
.clock {
  display: flex;
  flex-direction: column;
  width: 87px;
  font-size: 11px;
  line-height: 18px;
  text-align: center;
}
.notes { width: 24px; margin-right: 20px; }
```
